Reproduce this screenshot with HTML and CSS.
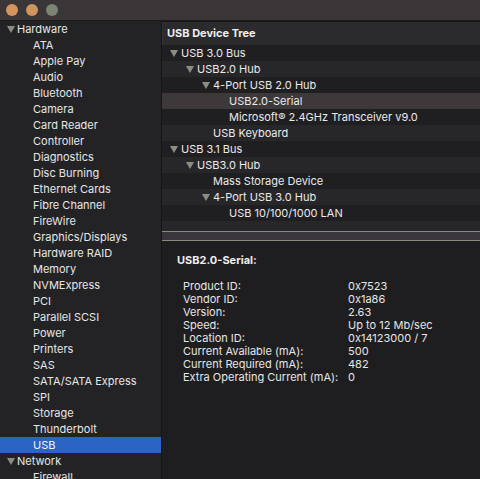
FILE: index.html
```html
<!DOCTYPE html>
<html lang="en">
<head>
<meta charset="utf-8">
<title>System Information – USB</title>
<link rel="stylesheet" href="styles.css">
</head>
<body>
<div class="window">
  <header class="titlebar">
    <span class="light light-close"></span>
    <span class="light light-min"></span>
    <span class="light light-zoom"></span>
  </header>
  <div class="main">
    <nav class="sidebar">
      <div class="side-row group"><span class="tri"></span>Hardware</div>
      <div class="side-row">ATA</div>
      <div class="side-row">Apple Pay</div>
      <div class="side-row">Audio</div>
      <div class="side-row">Bluetooth</div>
      <div class="side-row">Camera</div>
      <div class="side-row">Card Reader</div>
      <div class="side-row">Controller</div>
      <div class="side-row">Diagnostics</div>
      <div class="side-row">Disc Burning</div>
      <div class="side-row">Ethernet Cards</div>
      <div class="side-row">Fibre Channel</div>
      <div class="side-row">FireWire</div>
      <div class="side-row">Graphics/Displays</div>
      <div class="side-row">Hardware RAID</div>
      <div class="side-row">Memory</div>
      <div class="side-row">NVMExpress</div>
      <div class="side-row">PCI</div>
      <div class="side-row">Parallel SCSI</div>
      <div class="side-row">Power</div>
      <div class="side-row">Printers</div>
      <div class="side-row">SAS</div>
      <div class="side-row">SATA/SATA Express</div>
      <div class="side-row">SPI</div>
      <div class="side-row">Storage</div>
      <div class="side-row">Thunderbolt</div>
      <div class="side-row selected">USB</div>
      <div class="side-row group"><span class="tri"></span>Network</div>
      <div class="side-row">Firewall</div>
    </nav>
    <section class="content">
      <div class="tree">
        <div class="tree-header">USB Device Tree</div>
        <div class="tree-rows">
          <div class="tree-row lvl0"><span class="tri"></span>USB 3.0 Bus</div>
          <div class="tree-row alt lvl1"><span class="tri"></span>USB2.0 Hub</div>
          <div class="tree-row lvl2"><span class="tri"></span>4-Port USB 2.0 Hub</div>
          <div class="tree-row current lvl3"><span class="spacer"></span>USB2.0-Serial</div>
          <div class="tree-row lvl3"><span class="spacer"></span>Microsoft® 2.4GHz Transceiver v9.0</div>
          <div class="tree-row alt lvl2"><span class="spacer"></span>USB Keyboard</div>
          <div class="tree-row lvl0"><span class="tri"></span>USB 3.1 Bus</div>
          <div class="tree-row alt lvl1"><span class="tri"></span>USB3.0 Hub</div>
          <div class="tree-row lvl2"><span class="spacer"></span>Mass Storage Device</div>
          <div class="tree-row alt lvl2"><span class="tri"></span>4-Port USB 3.0 Hub</div>
          <div class="tree-row lvl3"><span class="spacer"></span>USB 10/100/1000 LAN</div>
          <div class="tree-row alt"></div>
        </div>
      </div>
      <div class="splitter"></div>
      <div class="detail">
        <h2 class="detail-title">USB2.0-Serial:</h2>
        <dl class="props">
          <dt>Product ID:</dt><dd>0x7523</dd>
          <dt>Vendor ID:</dt><dd>0x1a86</dd>
          <dt>Version:</dt><dd>2.63</dd>
          <dt>Speed:</dt><dd>Up to 12 Mb/sec</dd>
          <dt>Location ID:</dt><dd>0x14123000 / 7</dd>
          <dt>Current Available (mA):</dt><dd>500</dd>
          <dt>Current Required (mA):</dt><dd>482</dd>
          <dt>Extra Operating Current (mA):</dt><dd>0</dd>
        </dl>
      </div>
    </section>
  </div>
</div>
</body>
</html>
```
FILE: styles.css
```css
* { box-sizing: border-box; }

html, body {
  margin: 0;
  padding: 0;
  width: 480px;
  height: 479px;
  overflow: hidden;
  background: #1e1e20;
}

body {
  font-family: Inter, "Liberation Sans", sans-serif;
  font-size: 11px;
  color: #e6e6e6;
}

.window {
  display: flex;
  flex-direction: column;
  width: 480px;
  height: 479px;
}

.titlebar {
  height: 21px;
  flex: none;
  display: flex;
  align-items: flex-start;
  gap: 8px;
  padding: 4px 0 0 6px;
  background: #3a3537;
  border-bottom: 1px solid #1a1a1c;
}

.light {
  width: 12px;
  height: 12px;
  border-radius: 50%;
}
.light-close { background: #d3955d; }
.light-min { background: #d0955f; }
.light-zoom { background: #7c8475; }

.main {
  flex: 1;
  display: flex;
  min-height: 0;
}

/* ---------- Sidebar ---------- */
.sidebar {
  width: 161px;
  flex: none;
  background: #232326;
  overflow: hidden;
}

.side-row {
  height: 16px;
  line-height: 16px;
  padding-left: 33px;
  white-space: nowrap;
  display: flex;
  align-items: center;
}

.side-row.group {
  padding-left: 7px;
}

.side-row.selected {
  background: #2b64c5;
  color: #f4f6fa;
}

.tri {
  width: 0;
  height: 0;
  flex: none;
  border-left: 4px solid transparent;
  border-right: 4px solid transparent;
  border-top: 7px solid #8a8f83;
  margin-right: 2px;
}

/* ---------- Content ---------- */
.content {
  flex: 1;
  display: flex;
  flex-direction: column;
  min-width: 0;
  border-left: 1px solid #161618;
}

.tree {
  height: 210px;
  flex: none;
  display: flex;
  flex-direction: column;
  overflow: hidden;
  background: #1f1f22;
  border-top: 1px solid #151517;
}

.tree-header {
  height: 23px;
  flex: none;
  line-height: 23px;
  padding-left: 4px;
  font-weight: 700;
  color: #efefef;
  background: #2b2a2d;
  border-left: 1px solid #343336;
}

.tree-rows {
  flex: 1;
  overflow: hidden;
}

.tree-row {
  height: 16px;
  flex: none;
  display: flex;
  align-items: center;
  padding-left: 8px;
  white-space: nowrap;
  color: #eaeaea;
}

.tree-row.alt { background: #27272a; }
.tree-row.current { background: #3d393b; }

.tree-row .tri { margin-right: 3px; }

.spacer {
  width: 11px;
  flex: none;
}

.lvl1 { padding-left: 24px; }
.lvl2 { padding-left: 40px; }
.lvl3 { padding-left: 56px; }

.splitter {
  height: 10px;
  flex: none;
  background: #38353b;
  border-top: 1px solid #868b80;
  border-bottom: 1px solid #868b80;
}

/* ---------- Detail ---------- */
.detail {
  flex: 1;
  background: #1e1e20;
  padding: 12px 0 0 15px;
}

.detail-title {
  margin: 0;
  font-size: 11px;
  font-weight: 700;
  line-height: 14px;
  color: #efefef;
}

.props {
  margin: 13px 0 0 6px;
  display: grid;
  grid-template-columns: 165px auto;
  line-height: 13px;
}

.props dt,
.props dd {
  margin: 0;
  white-space: nowrap;
}
```
